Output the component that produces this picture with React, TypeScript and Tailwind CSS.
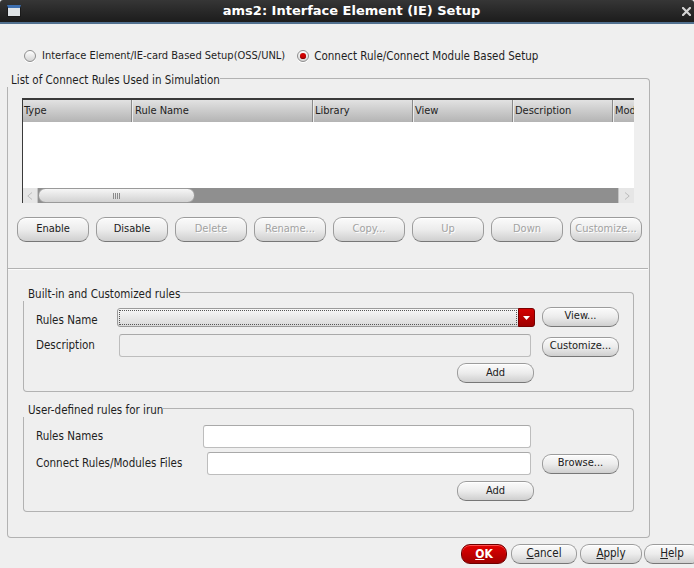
import React from "react";

type BtnProps = {
  children: React.ReactNode;
  cls: string;
  disabled?: boolean;
};

function Btn({ children, cls, disabled }: BtnProps) {
  return (
    <div
      className={
        "flex items-center justify-center shrink-0 rounded-[9px] border border-[#9c9c9c] border-b-[#777777] bg-linear-to-b from-[#fbfbfb] via-[#ececec] to-[#cfcfcf] shadow-[inset_0_1px_0_#ffffff] " +
        (disabled ? "text-[#a2a2a2] [text-shadow:1px_1px_0_#ffffff] " : "text-[#202020] ") +
        cls
      }
    >
      {children}
    </div>
  );
}

function Radio({ checked }: { checked?: boolean }) {
  return (
    <div className="w-[12px] h-[12px] shrink-0 rounded-full border border-[#8e8e8e] bg-linear-to-b from-[#ffffff] to-[#d4d4d4] flex items-center justify-center shadow-[0_1px_0_#ffffff]">
      {checked && <div className="w-[6px] h-[6px] rounded-full bg-[#d10000] shadow-[inset_0_-1px_1px_#7a0000]" />}
    </div>
  );
}

function GroupHeader({ title, cls, textCls }: { title: string; cls: string; textCls: string }) {
  return (
    <div className={"flex h-[13px] " + cls}>
      <span className={"leading-[13px] text-[11.5px] whitespace-nowrap " + textCls}>{title}</span>
      <div className="flex-1 self-end h-[9px] border-t border-r border-[#b2b2b2] rounded-tr-[4px]" />
    </div>
  );
}

function Field({ cls, disabled }: { cls: string; disabled?: boolean }) {
  return (
    <div
      className={
        "shrink-0 h-[23px] rounded-[3px] border border-[#bdbdbd] border-t-[#a9a9a9] " +
        (disabled ? "bg-[#efefef] " : "bg-white ") +
        cls
      }
    />
  );
}

export default function App() {
  const cols = [
    { t: "Type", w: "w-[109px] pl-[1px]" },
    { t: "Rule Name", w: "w-[181px] pl-[3px]" },
    { t: "Library", w: "w-[100px] pl-[2px]" },
    { t: "View", w: "w-[100px] pl-[2px]" },
    { t: "Description", w: "w-[100px] pl-[2px]" },
  ];
  return (
    <div className="w-[694px] h-[568px] overflow-hidden bg-[#efefef] flex flex-col font-['DejaVu_Sans_Condensed','DejaVu_Sans',sans-serif] font-stretch-condensed text-[11px] text-[#1e1e1e]">
      {/* Title bar */}
      <div className="h-[24px] shrink-0 flex items-center bg-linear-to-b from-[#363636] to-[#1c1c1c] border-b-2 border-[#51708f] rounded-t-[3px]">
        <div className="ml-[7px] w-[14px] h-[12px] border border-[#1a1a1a] bg-[#dfe3e6] border-t-[3px] border-t-[#3d6fb0] shrink-0" />
        <div className="flex-1 text-center text-white font-bold text-[13px] font-['DejaVu_Sans',sans-serif] font-stretch-normal leading-[22px]">
          ams2: Interface Element (IE) Setup
        </div>
        <svg width="9" height="9" viewBox="0 0 9 9" className="mr-[3px] shrink-0">
          <path d="M1 1 L8 8 M8 1 L1 8" stroke="#d4d4d4" strokeWidth="2.2" strokeLinecap="square" />
        </svg>
      </div>

      {/* Radio row */}
      <div className="mt-[25px] h-[14px] flex items-center shrink-0">
        <div className="ml-[24px]"><Radio /></div>
        <span className="ml-[6px] leading-[14px] whitespace-nowrap">Interface Element/IE-card Based Setup(OSS/UNL)</span>
        <div className="ml-[12px]"><Radio checked /></div>
        <span className="ml-[5px] leading-[14px] text-[11.5px] whitespace-nowrap">Connect Rule/Connect Module Based Setup</span>
      </div>

      {/* Outer group */}
      <GroupHeader title="List of Connect Rules Used in Simulation" cls="mt-[11px] ml-[7px] w-[643px] shrink-0" textCls="ml-[4px]" />
      <div className="ml-[7px] w-[643px] h-[451px] shrink-0 border-l border-r border-b border-[#b2b2b2] rounded-b-[4px] flex flex-col">
        {/* Table */}
        <div className="mt-[11px] ml-[14px] w-[612px] h-[105px] flex flex-col border-t-2 border-l border-[#3a3a3a] bg-white">
          <div className="h-[22px] flex bg-linear-to-b from-[#e2e2e2] to-[#b4b4b4] shrink-0">
            {cols.map((c) => (
              <div key={c.t} className={"shrink-0 h-full flex items-center pt-[1px] border-r border-[#8a8a8a] shadow-[1px_0_0_#ececec] whitespace-nowrap " + c.w}>
                {c.t}
              </div>
            ))}
            <div className="flex-1 h-full flex items-center pt-[1px] pl-[2px] overflow-hidden whitespace-nowrap">Mod</div>
          </div>
          <div className="flex-1" />
          <div className="h-[15px] flex bg-[#8f8f8f] shrink-0">
            <div className="w-[15px] h-full bg-[#e6e6e6] border-r border-[#c4c4c4] flex items-center justify-center">
              <svg width="6" height="8" viewBox="0 0 6 8"><path d="M5 0.5 L0.8 4 L5 7.5" fill="none" stroke="#bdbdbd" strokeWidth="1" /></svg>
            </div>
            <div className="w-[157px] h-full rounded-full border border-[#9a9a9a] bg-linear-to-b from-[#f6f6f6] to-[#d2d2d2] flex items-center justify-center gap-[1px]">
              <div className="w-px h-[6px] bg-[#8a8a8a]" />
              <div className="w-px h-[6px] bg-[#8a8a8a]" />
              <div className="w-px h-[6px] bg-[#8a8a8a]" />
              <div className="w-px h-[6px] bg-[#8a8a8a]" />
            </div>
            <div className="flex-1" />
            <div className="w-[16px] h-full bg-[#e6e6e6] border-l border-[#c4c4c4] flex items-center justify-center">
              <svg width="6" height="8" viewBox="0 0 6 8"><path d="M1 0.5 L5.2 4 L1 7.5" fill="none" stroke="#bdbdbd" strokeWidth="1" /></svg>
            </div>
          </div>
        </div>

        {/* Buttons row */}
        <div className="mt-[14px] ml-[9px] flex gap-[7px]">
          <Btn cls="w-[72px] h-[25px]">Enable</Btn>
          <Btn cls="w-[72px] h-[25px]">Disable</Btn>
          <Btn cls="w-[72px] h-[25px]" disabled>Delete</Btn>
          <Btn cls="w-[72px] h-[25px]" disabled>Rename...</Btn>
          <Btn cls="w-[72px] h-[25px]" disabled>Copy...</Btn>
          <Btn cls="w-[72px] h-[25px]" disabled>Up</Btn>
          <Btn cls="w-[72px] h-[25px]" disabled>Down</Btn>
          <Btn cls="w-[72px] h-[25px]" disabled>Customize...</Btn>
        </div>

        {/* Separator */}
        <div className="mt-[26px] w-[640px] h-[2px] border-t border-[#b2b2b2] border-b border-b-[#fbfbfb]" />

        {/* Group 2 */}
        <GroupHeader title="Built-in and Customized rules" cls="mt-[18px] ml-[15px] w-[611px]" textCls="ml-[5px]" />
        <div className="ml-[15px] w-[611px] h-[91px] border-l border-r border-b border-[#b2b2b2] rounded-b-[4px] flex flex-col pl-[12px] text-[11.5px]">
          <div className="mt-[5px] h-[21px] flex items-center">
            <span className="w-[81px] shrink-0 mt-[8px]">Rules Name</span>
            <div className="w-[418px] h-[19px] mt-[2px] flex rounded-[3px] border border-[#9a9a9a] bg-linear-to-b from-[#f8f8f8] to-[#dadada]">
              <div className="flex-1 m-[1px] border border-dotted border-[#555555]" />
              <div className="w-[17px] -my-px -mr-px rounded-r-[3px] bg-linear-to-b from-[#d40000] to-[#9e0000] border border-[#7a0000] flex items-center justify-center">
                <svg width="7" height="4" viewBox="0 0 7 4"><path d="M0 0 L7 0 L3.5 4 Z" fill="#ffffff" /></svg>
              </div>
            </div>
            <Btn cls="ml-[7px] w-[77px] h-[20px] text-[11px]">View...</Btn>
          </div>
          <div className="mt-[7px] h-[23px] flex items-center">
            <span className="w-[83px] shrink-0 mt-[1px]">Description</span>
            <Field cls="w-[412px]" disabled />
            <Btn cls="ml-[11px] w-[77px] h-[20px] mt-[2px] text-[11px]">Customize...</Btn>
          </div>
          <div className="mt-[6px] flex">
            <Btn cls="ml-[421px] w-[77px] h-[20px] text-[11px]">Add</Btn>
          </div>
        </div>

        {/* Group 3 */}
        <GroupHeader title="User-defined rules for irun" cls="mt-[12px] ml-[15px] w-[611px]" textCls="ml-[5px]" />
        <div className="ml-[15px] w-[611px] h-[95px] border-l border-r border-b border-[#b2b2b2] rounded-b-[4px] flex flex-col pl-[12px] text-[11.5px]">
          <div className="mt-[8px] h-[23px] flex items-center">
            <span className="w-[167px] shrink-0">Rules Names</span>
            <Field cls="w-[328px]" />
          </div>
          <div className="mt-[4px] h-[23px] flex items-center">
            <span className="w-[171px] shrink-0">Connect Rules/Modules Files</span>
            <Field cls="w-[324px]" />
            <Btn cls="ml-[11px] w-[77px] h-[20px] text-[11px]">Browse...</Btn>
          </div>
          <div className="mt-[6px] flex">
            <Btn cls="ml-[421px] w-[77px] h-[20px] text-[11px]">Add</Btn>
          </div>
        </div>
      </div>

      {/* Bottom buttons */}
      <div className="mt-[6px] h-[20px] flex shrink-0 text-[11.5px]">
        <div className="ml-[461px] w-[46px] h-[20px] shrink-0 rounded-[9px] border border-[#6e0000] bg-linear-to-b from-[#e40000] to-[#a20000] flex items-center justify-center text-white font-bold text-[12px] shadow-[inset_0_1px_0_#ff5050]">
          <span><span className="underline">O</span>K</span>
        </div>
        <Btn cls="ml-[4px] w-[66px] h-[20px]"><span><span className="underline">C</span>ancel</span></Btn>
        <Btn cls="ml-[3px] w-[62px] h-[20px]"><span><span className="underline">A</span>pply</span></Btn>
        <Btn cls="ml-[2px] w-[56px] h-[20px]"><span><span className="underline">H</span>elp</span></Btn>
      </div>
    </div>
  );
}
